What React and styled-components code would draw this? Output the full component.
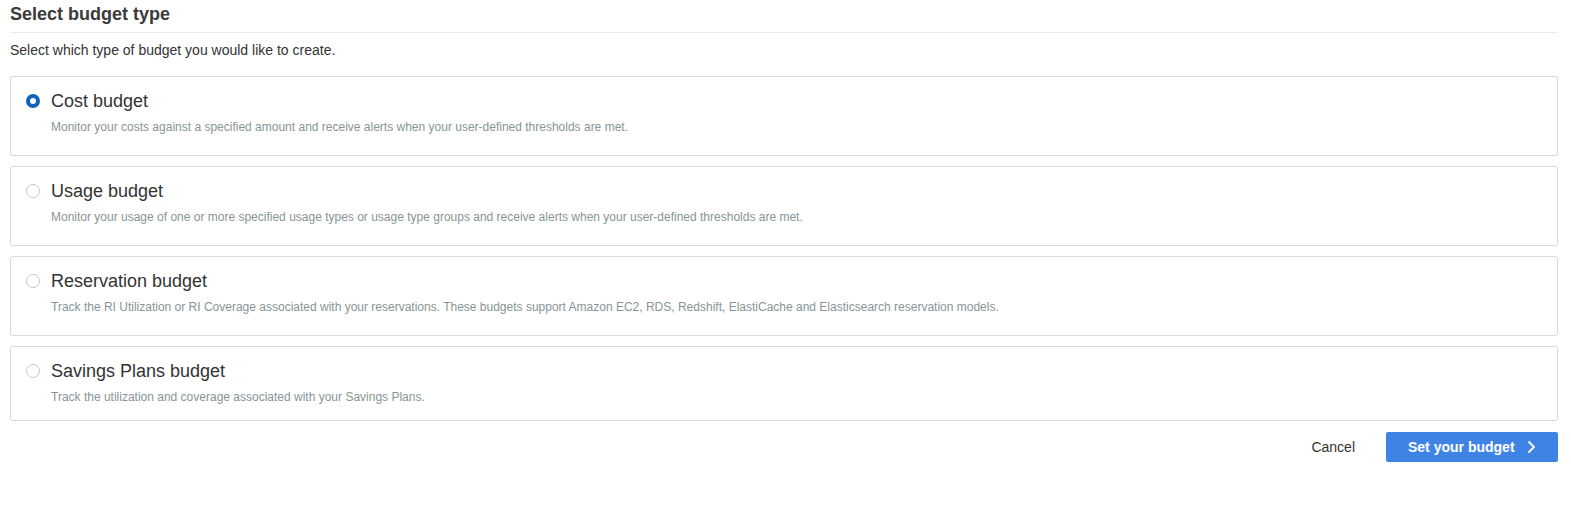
import styled, { createGlobalStyle } from "styled-components";

const GlobalStyle = createGlobalStyle`
  body {
    margin: 0;
    background: #ffffff;
    font-family: "Liberation Sans", Arial, sans-serif;
    color: #16191f;
  }
`;

const Page = styled.div`
  width: 1548px;
  padding: 0 0 0 10px;
`;

const Header = styled.div`
  border-bottom: 1px solid #eaeded;
  padding-bottom: 4px;
`;

const Title = styled.h2`
  margin: 0;
  font-size: 18px;
  line-height: 28px;
  font-weight: 700;
  color: #3a3a3a;
`;

const Intro = styled.p`
  margin: 7px 0 16px;
  font-size: 14px;
  line-height: 20px;
  color: #333333;
`;

const Options = styled.div`
  display: flex;
  flex-direction: column;
  gap: 10px;
`;

const Card = styled.label`
  display: flex;
  align-items: flex-start;
  gap: 11px;
  border: 1px solid #d5dbdb;
  border-radius: 2px;
  padding: ${(p) => (p.$last ? "13px 15px 15px" : "13px 15px 20px")};
  cursor: pointer;
`;

const Radio = styled.span`
  box-sizing: border-box;
  flex: none;
  width: 14px;
  height: 14px;
  margin-top: 4px;
  border-radius: 50%;
  background: #ffffff;
  border: ${(p) => (p.$checked ? "4px solid #0f63b8" : "1px solid #c4c9cc")};
`;

const Body = styled.div`
  display: flex;
  flex-direction: column;
`;

const OptionTitle = styled.div`
  font-size: 18px;
  line-height: 22px;
  color: #333333;
`;

const OptionText = styled.div`
  margin-top: 7px;
  font-size: 12px;
  line-height: 16px;
  color: #879596;
`;

const Footer = styled.div`
  display: flex;
  justify-content: flex-end;
  align-items: center;
  gap: 31px;
  margin-top: 11px;
`;

const LinkButton = styled.button`
  border: none;
  background: none;
  padding: 0;
  font-family: inherit;
  font-size: 14px;
  color: #333333;
  cursor: pointer;
`;

const PrimaryButton = styled.button`
  display: flex;
  align-items: center;
  gap: 12px;
  height: 30px;
  width: 172px;
  padding: 0 0 0 22px;
  border: none;
  border-radius: 2px;
  background: #3f84e5;
  color: #ffffff;
  font-family: inherit;
  font-size: 14px;
  font-weight: 700;
  cursor: pointer;
`;

const options = [
  {
    title: "Cost budget",
    text: "Monitor your costs against a specified amount and receive alerts when your user-defined thresholds are met.",
  },
  {
    title: "Usage budget",
    text: "Monitor your usage of one or more specified usage types or usage type groups and receive alerts when your user-defined thresholds are met.",
  },
  {
    title: "Reservation budget",
    text: "Track the RI Utilization or RI Coverage associated with your reservations. These budgets support Amazon EC2, RDS, Redshift, ElastiCache and Elasticsearch reservation models.",
  },
  {
    title: "Savings Plans budget",
    text: "Track the utilization and coverage associated with your Savings Plans.",
  },
];

function Chevron() {
  return (
    <svg width="9" height="14" viewBox="0 0 9 14" fill="none">
      <path d="M1.5 1.5 L7 7 L1.5 12.5" stroke="#ffffff" strokeWidth="1.8" />
    </svg>
  );
}

export default function App() {
  const selected = 0;
  return (
    <Page>
      <GlobalStyle />
      <Header>
        <Title>Select budget type</Title>
      </Header>
      <Intro>Select which type of budget you would like to create.</Intro>
      <Options>
        {options.map((o, i) => (
          <Card key={o.title} $last={i === options.length - 1}>
            <Radio $checked={i === selected} />
            <Body>
              <OptionTitle>{o.title}</OptionTitle>
              <OptionText>{o.text}</OptionText>
            </Body>
          </Card>
        ))}
      </Options>
      <Footer>
        <LinkButton>Cancel</LinkButton>
        <PrimaryButton>
          Set your budget
          <Chevron />
        </PrimaryButton>
      </Footer>
    </Page>
  );
}
